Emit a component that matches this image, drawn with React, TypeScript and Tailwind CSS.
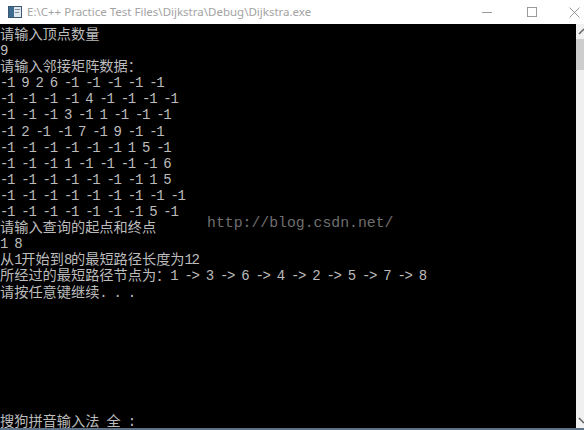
import type { ReactNode } from "react";

// console output, one entry per row
const lines = [
  "请输入顶点数量",
  "9",
  "请输入邻接矩阵数据：",
  "-1 9 2 6 -1 -1 -1 -1 -1",
  "-1 -1 -1 -1 4 -1 -1 -1 -1",
  "-1 -1 -1 3 -1 1 -1 -1 -1",
  "-1 2 -1 -1 7 -1 9 -1 -1",
  "-1 -1 -1 -1 -1 -1 1 5 -1",
  "-1 -1 -1 1 -1 -1 -1 -1 6",
  "-1 -1 -1 -1 -1 -1 -1 1 5",
  "-1 -1 -1 -1 -1 -1 -1 -1 -1",
  "-1 -1 -1 -1 -1 -1 -1 5 -1",
  "请输入查询的起点和终点",
  "1 8",
  "从1开始到8的最短路径长度为12",
  "所经过的最短路径节点为：1 -> 3 -> 6 -> 4 -> 2 -> 5 -> 7 -> 8",
  "请按任意键继续. . .",
];

// split a line into wide (CJK) and narrow runs so widths match the console grid
function ConsoleText({ text }: { text: string }) {
  const parts = text.split(/([\u3000-\u9fff\uff00-\uffef]+)/).filter((p) => p.length > 0);
  const out: ReactNode[] = parts.map((p, i) =>
    /[\u3000-\u9fff\uff00-\uffef]/.test(p) ? (
      <span key={i} className="font-['Noto_Sans_CJK_SC',sans-serif] text-[14.2px]">
        {p}
      </span>
    ) : (
      <span key={i} className="font-['Liberation_Mono',monospace] text-[14px] tracking-[-1.3px]">
        {p}
      </span>
    ),
  );
  return <>{out}</>;
}

function TitleBar() {
  return (
    <div className="h-[24px] bg-white flex items-center shrink-0">
      <svg width="14" height="12" viewBox="0 0 14 12" className="ml-[8px] mr-[5px]">
        <rect x="0.5" y="0.5" width="13" height="11" fill="#dfe6ee" stroke="#3d5875" />
        <rect x="1" y="1" width="5" height="10" fill="#3d6b8f" />
        <rect x="7" y="3" width="5" height="1" fill="#7a8fa3" />
        <rect x="7" y="6" width="4" height="1" fill="#7a8fa3" />
      </svg>
      <span className="font-['Noto_Sans',sans-serif] text-[11.5px] text-[#a3a3a3] whitespace-pre">
        {"E:\\C++ Practice Test Files\\Dijkstra\\Debug\\Dijkstra.exe"}
      </span>
      <div className="ml-auto flex items-center h-full">
        <div className="w-[45px] h-full flex items-center justify-center">
          <div className="w-[10px] h-px bg-[#9a9a9a]" />
        </div>
        <div className="w-[45px] h-full flex items-center justify-center">
          <div className="w-[10px] h-[10px] border border-[#9a9a9a]" />
        </div>
        <div className="w-[30px] h-full flex items-center justify-end pr-[4px]">
          <svg width="11" height="11" viewBox="0 0 11 11">
            <path d="M0.5 0.5 L10.5 10.5 M10.5 0.5 L0.5 10.5" stroke="#9a9a9a" strokeWidth="1" />
          </svg>
        </div>
      </div>
    </div>
  );
}

function ScrollBar() {
  return (
    <div className="w-[8px] bg-[#f0f0f0] flex flex-col shrink-0">
      <svg width="8" height="15" viewBox="0 0 8 15">
        <path d="M3 10 L8 5" stroke="#606060" strokeWidth="1.5" />
      </svg>
      <div className="h-[31px] bg-[#cdcdcd]" />
      <div className="flex-1" />
      <svg width="8" height="15" viewBox="0 0 8 15">
        <path d="M3 5 L8 10" stroke="#606060" strokeWidth="1.5" />
      </svg>
    </div>
  );
}

export default function App() {
  return (
    <div className="w-[584px] h-[430px] flex flex-col overflow-hidden bg-black">
      <TitleBar />
      <div className="flex-1 flex min-h-0">
        <div className="relative flex-1 bg-black flex flex-col pt-[1px] text-[#bcbcbc]">
          {lines.map((l, i) => (
            <div key={i} className="h-[16.1px] leading-[16px] whitespace-pre">
              <ConsoleText text={l} />
            </div>
          ))}
          <div className="mt-auto h-[16px] leading-[16px] whitespace-pre">
            <ConsoleText text="搜狗拼音输入法 全 :" />
          </div>
          {/* blog watermark over the output */}
          <div className="absolute left-[207px] top-[191px] font-['Liberation_Mono',monospace] text-[14.8px] leading-[16px] text-[#6f6f6f] whitespace-pre">
            http://blog.csdn.net/
          </div>
        </div>
        <ScrollBar />
      </div>
      <div className="h-[2px] bg-[#5f7186] shrink-0" />
    </div>
  );
}
